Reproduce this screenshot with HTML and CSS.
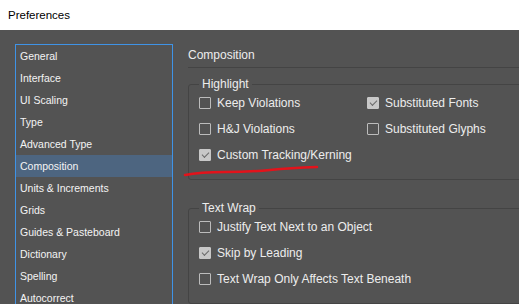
FILE: index.html
```html
<!DOCTYPE html>
<html lang="en">
<head>
    <meta charset="UTF-8">
    <title>Preferences</title>
    <link rel="stylesheet" href="styles.css">
</head>
<body>
    <div class="window">
        <div class="titlebar">Preferences</div>

        <div class="window-body">
            <aside class="sidebar">
                <ul class="nav-list">
                    <li>General</li>
                    <li>Interface</li>
                    <li>UI Scaling</li>
                    <li>Type</li>
                    <li>Advanced Type</li>
                    <li class="active">Composition</li>
                    <li>Units &amp; Increments</li>
                    <li>Grids</li>
                    <li>Guides &amp; Pasteboard</li>
                    <li>Dictionary</li>
                    <li>Spelling</li>
                    <li>Autocorrect</li>
                </ul>
            </aside>

            <main class="panel">
                <h2 class="panel-title">Composition</h2>

                <fieldset class="group">
                    <legend>Highlight</legend>
                    <div class="options two-col">
                        <label class="option"><span class="box"></span>Keep Violations</label>
                        <label class="option"><span class="box checked"></span>Substituted Fonts</label>
                        <label class="option"><span class="box"></span>H&amp;J Violations</label>
                        <label class="option"><span class="box"></span>Substituted Glyphs</label>
                        <label class="option"><span class="box checked"></span>Custom Tracking/Kerning</label>
                    </div>
                </fieldset>

                <fieldset class="group wrap-group">
                    <legend>Text Wrap</legend>
                    <div class="options">
                        <label class="option"><span class="box"></span>Justify Text Next to an Object</label>
                        <label class="option"><span class="box checked"></span>Skip by Leading</label>
                        <label class="option"><span class="box"></span>Text Wrap Only Affects Text Beneath</label>
                    </div>
                </fieldset>
            </main>
        </div>

        <!-- hand-drawn red underline -->
        <svg class="annotation" width="519" height="304" viewBox="0 0 519 304">
            <path d="M185 175 Q 200 172 225 172 T 270 170 T 317 167" fill="none" stroke="#e3131b" stroke-width="2.5" stroke-linecap="round"/>
        </svg>
    </div>
</body>
</html>
```

FILE: styles.css
```css
:root {
    --bg: #535353;
    --line: #444444;
    --text: #ededed;
    --accent: #3f93e6;
    --selected: #4d6580;
    --box: #bcbcbc;
}

* {
    margin: 0;
    padding: 0;
    box-sizing: border-box;
}

body {
    width: 519px;
    height: 304px;
    overflow: hidden;
    font-family: 'Liberation Sans', Arial, sans-serif;
    background: var(--bg);
}

.window {
    position: relative;
    height: 100%;
    display: flex;
    flex-direction: column;
}

.titlebar {
    height: 30px;
    line-height: 30px;
    padding-left: 8px;
    background: #ffffff;
    color: #000;
    font-size: 11.5px;
}

.window-body {
    flex: 1;
    display: flex;
    background: var(--bg);
    overflow: hidden;
}

.sidebar {
    width: 173px;
    flex-shrink: 0;
    padding: 14px 0 0 15px;
}

.nav-list {
    list-style: none;
    height: 100%;
    border: 1px solid var(--accent);
    border-bottom: none;
}

.nav-list li {
    height: 22px;
    line-height: 22px;
    padding-left: 4px;
    color: #f4f4f4;
    font-size: 10.5px;
}

.nav-list li.active {
    background: var(--selected);
}

.panel {
    flex: 1;
    padding-left: 15px;
    overflow: hidden;
    color: var(--text);
    font-size: 12px;
}

.panel-title {
    margin-top: 14px;
    line-height: 23px;
    font-size: 12px;
    font-weight: normal;
    border-bottom: 1px solid var(--line);
}

.group {
    margin: 8px -20px 0 0;
    padding: 0 10px 13px 10px;
    border: 1px solid var(--line);
    border-radius: 3px;
}

.group legend {
    padding: 0 3px;
    line-height: 16px;
    font-size: 12px;
}

.wrap-group {
    margin-top: 20px;
}

.options {
    display: grid;
    grid-auto-rows: 22px;
    row-gap: 4px;
}

.two-col {
    grid-template-columns: 168px 1fr;
}

.option {
    display: flex;
    align-items: center;
    gap: 6px;
    white-space: nowrap;
}

.box {
    width: 12px;
    height: 12px;
    flex-shrink: 0;
    border: 1px solid var(--box);
    border-radius: 1px;
    display: flex;
    align-items: center;
    justify-content: center;
}

.box.checked {
    background: #c8c8c8;
    border-color: #c8c8c8;
}

.box.checked::after {
    content: '';
    width: 6px;
    height: 3px;
    margin-top: -2px;
    border-left: 1.5px solid #6a6a6a;
    border-bottom: 1.5px solid #6a6a6a;
    transform: rotate(-45deg);
}

.annotation {
    position: absolute;
    top: 0;
    left: 0;
    pointer-events: none;
}
```
